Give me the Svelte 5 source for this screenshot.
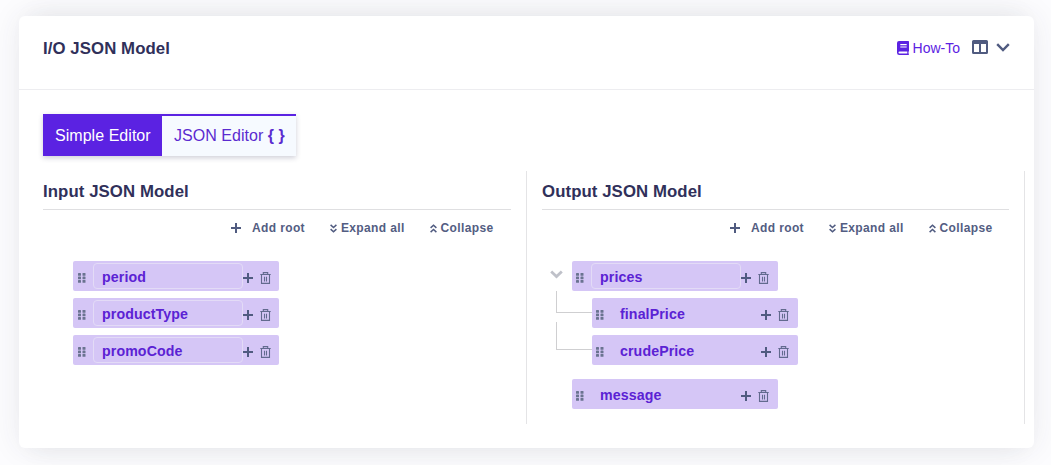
<script>
  const columns = [
    {
      title: 'Input JSON Model',
      nodes: [
        { name: 'period', boxed: true },
        { name: 'productType', boxed: true },
        { name: 'promoCode', boxed: true }
      ]
    },
    {
      title: 'Output JSON Model',
      nodes: [
        {
          name: 'prices',
          boxed: true,
          children: [{ name: 'finalPrice' }, { name: 'crudePrice' }]
        },
        { name: 'message' }
      ]
    }
  ];
</script>

{#snippet row(node)}
  <div class="node">
    <svg class="grip" width="8" height="10" viewBox="0 0 8 10">
      {#each [0, 3.5, 7] as y}
        <rect x="0" {y} width="3" height="2.8" rx=".6" />
        <rect x="4.5" {y} width="3" height="2.8" rx=".6" />
      {/each}
    </svg>
    <span class="name" class:boxed={node.boxed}>{node.name}</span>
    <svg class="plus" width="10" height="10" viewBox="0 0 10 10"><path d="M5 0v10M0 5h10" /></svg>
    <svg class="trash" width="11" height="12" viewBox="0 0 11 12">
      <path d="M.3 2.5h10.4M3.3 2.3V.6h4.4v1.7M1.5 2.7v8.7h8V2.7M4.5 4.7v4.8M6.5 4.7v4.8" />
    </svg>
  </div>
{/snippet}

<main class="card">
  <header>
    <h1>I/O JSON Model</h1>
    <div class="tools">
      <a class="howto" href="#howto">
        <svg width="12" height="14" viewBox="0 0 12 14">
          <path fill-rule="evenodd" d="M2 0h9.3a.7.7 0 0 1 .7.7v9.1a.7.7 0 0 1-.5.7v2.1a.7.7 0 0 1 .5.7.7.7 0 0 1-.7.7H2.3A2.3 2.3 0 0 1 0 11.7V2a2 2 0 0 1 2-2zM3.3 3v1.2h6.4V3zM3.3 5.4v1.2h6.4V5.4zM2.5 10.5a1 1 0 0 0 0 2h7.8v-2z" />
        </svg>
        <span>How-To</span>
      </a>
      <svg class="layout" width="16" height="14" viewBox="0 0 16 14">
        <path fill-rule="evenodd" d="M1.5 0h13A1.5 1.5 0 0 1 16 1.5v11a1.5 1.5 0 0 1-1.5 1.5h-13A1.5 1.5 0 0 1 0 12.5v-11A1.5 1.5 0 0 1 1.5 0zM2 4v8h5V4zM9 4v8h5V4z" />
      </svg>
      <svg class="chevron" width="14" height="9" viewBox="0 0 14 9"><path d="M1.2 1.2 7 7l5.8-5.8" /></svg>
    </div>
  </header>

  <nav>
    <button class="tab active">Simple Editor</button>
    <button class="tab">JSON Editor <b>{'{ }'}</b></button>
  </nav>

  <div class="columns">
    {#each columns as column}
      <section>
        <h2>{column.title}</h2>
        <div class="actions">
          <button class="add">
            <svg class="plus" width="10" height="10" viewBox="0 0 10 10"><path d="M5 0v10M0 5h10" /></svg>Add root
          </button>
          <button>
            <svg class="double" width="7" height="9" viewBox="0 0 7 9"><path d="M.6.9l2.9 2.6L6.4.9M.6 5.1l2.9 2.6 2.9-2.6" /></svg>Expand all
          </button>
          <button>
            <svg class="double" width="7" height="9" viewBox="0 0 7 9"><path d="M.6 3.9l2.9-2.6 2.9 2.6M.6 8.1l2.9-2.6 2.9 2.6" /></svg>Collapse
          </button>
        </div>
        <div class="tree">
          {#each column.nodes as node}
            {#if node.children}
              <div class="parent">
                <svg class="toggle" width="13" height="9" viewBox="0 0 13 9"><path d="M1.2 1.5l5.3 5 5.3-5" /></svg>
                {@render row(node)}
              </div>
              <div class="children">
                {#each node.children as child}
                  <div class="child"><i></i>{@render row(child)}</div>
                {/each}
              </div>
            {:else}
              {@render row(node)}
            {/if}
          {/each}
        </div>
      </section>
    {/each}
  </div>
</main>

<style>
  :global(body) {
    background: #fcfcfe;
  }
  :global(#app) {
    display: flow-root;
    height: 100vh;
    overflow: hidden;
  }
  * {
    box-sizing: border-box;
  }
  svg {
    display: block;
    flex: none;
  }
  .card {
    width: 1015px;
    height: 432px;
    margin: 16px 0 0 19px;
    border-radius: 6px;
    background: #fff;
    box-shadow:
      0 0 30px rgba(50, 60, 75, 0.09),
      0 -16px 24px -14px rgba(50, 60, 75, 0.06),
      0 16px 24px -14px rgba(50, 60, 75, 0.06);
    font-family: 'Liberation Sans', Arial, sans-serif;
    color: #30305a;
  }
  header {
    display: flex;
    justify-content: space-between;
    height: 74px;
    padding: 22px 24px 0;
    border-bottom: 1px solid #ededf0;
  }
  h1,
  h2 {
    margin: 0;
    font-size: 16.8px;
    line-height: 22px;
    font-weight: 700;
    letter-spacing: 0.08px;
  }
  .tools {
    display: flex;
    height: 20px;
  }
  .howto {
    display: flex;
    gap: 4px;
    color: #5b22e2;
    font-size: 14px;
    line-height: 20px;
    text-decoration: none;
  }
  .howto svg {
    margin-top: 3px;
    fill: #5b22e2;
  }
  .layout {
    margin: 2px 8px 0 12px;
    fill: #505b80;
  }
  .chevron {
    margin-top: 5px;
    fill: none;
    stroke: #505b80;
    stroke-width: 2.4;
  }
  nav {
    display: flex;
    width: 253px;
    height: 42px;
    margin: 24px 0 15px 24px;
    box-shadow: 0 2px 5px rgba(40, 40, 80, 0.22);
  }
  button {
    display: flex;
    align-items: center;
    padding: 0;
    border: 0;
    background: none;
    color: inherit;
    font: inherit;
    letter-spacing: inherit;
    white-space: pre;
  }
  .tab {
    flex: 1;
    padding-left: 12px;
    border-top: 2px solid #5b22e2;
    background: #f6faff;
    color: #5b2bd0;
    font-size: 16px;
    letter-spacing: 0.04px;
  }
  .tab.active {
    flex: 0 0 119px;
    background: #5b22e2;
    color: #fff;
  }
  .columns {
    display: flex;
    padding-left: 9px;
  }
  section {
    width: 498px;
    height: 253px;
    padding: 10px 15px 0;
    border-right: 1px solid #e4e4e6;
  }
  section:first-child {
    width: 499px;
  }
  h2 {
    height: 29px;
    border-bottom: 1px solid #dfdfe1;
  }
  .actions {
    display: flex;
    justify-content: flex-end;
    padding-right: 17.5px;
    height: 36px;
    color: #535d82;
    font-size: 12px;
    font-weight: 700;
    letter-spacing: 0.36px;
  }
  section + section .actions {
    padding-right: 16.5px;
  }
  .actions button {
    gap: 4px;
    margin-left: 25px;
  }
  .actions .add {
    gap: 11px;
    margin: 0;
  }
  .plus {
    fill: none;
    stroke: #505b80;
    stroke-width: 2;
  }
  .double {
    fill: none;
    stroke: #505b80;
    stroke-width: 1.5;
  }
  .tree {
    display: flex;
    flex-direction: column;
    gap: 7px;
    padding: 15px 0 0 30px;
  }
  .node {
    display: flex;
    align-items: center;
    width: 206px;
    height: 30px;
    padding-left: 5px;
    border-radius: 2px;
    background: #d5c6f6;
  }
  section + section .node {
    padding-left: 4px;
  }
  .grip {
    margin: 4px 7px 0 0;
    fill: #6a7390;
  }
  .name {
    width: 150px;
    height: 26px;
    padding-left: 8px;
    border: 1px solid transparent;
    border-radius: 4px;
    color: #5b22d4;
    font-size: 14.2px;
    line-height: 27px;
    font-weight: 700;
    letter-spacing: 0.1px;
  }
  .name.boxed {
    border-color: #e3dbf6;
  }
  .node .plus {
    margin-top: 4px;
  }
  .trash {
    margin: 3px 0 0 7px;
    fill: none;
    stroke: #626a8e;
    stroke-width: 1.1;
  }
  .parent {
    display: flex;
    margin-left: -22px;
  }
  .toggle {
    margin: 9px 9px 0 0;
    fill: none;
    stroke: #bfc1c9;
    stroke-width: 2.8;
  }
  .children {
    display: flex;
    flex-direction: column;
    gap: 7px;
    margin: 0 0 7px -16px;
  }
  .child {
    display: flex;
  }
  .child i {
    width: 36px;
    height: 22px;
    margin-top: -7px;
    border: solid #cfcfd1;
    border-width: 0 0 1px 1px;
  }
  .child:last-child i {
    height: 28px;
    margin-top: -13px;
  }
</style>
